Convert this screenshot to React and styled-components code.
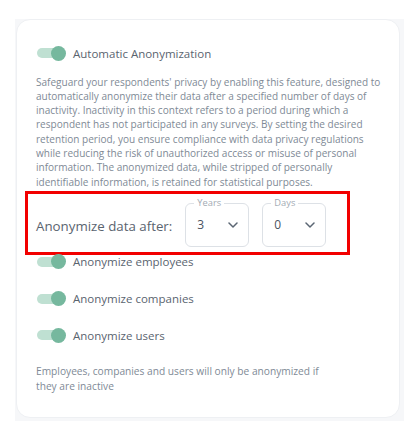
import React from 'react';
import styled, { createGlobalStyle } from 'styled-components';

const GlobalStyle = createGlobalStyle`
  body {
    margin: 0;
    background: #ffffff;
    font-family: "Open Sans", "Liberation Sans", sans-serif;
  }
`;

const options = ['Anonymize employees', 'Anonymize companies', 'Anonymize users'];

function Chevron() {
  return (
    <svg width="10" height="6" viewBox="0 0 10 6" fill="none">
      <path d="M1 1 L5 5 L9 1" stroke="#5b6673" strokeWidth="1.5" strokeLinecap="round" strokeLinejoin="round" />
    </svg>
  );
}

function Toggle({ on }) {
  return (
    <Track>
      <Knob $on={on} />
    </Track>
  );
}

function SelectBox({ label, value }) {
  return (
    <Field>
      <Legend>{label}</Legend>
      <Value>{value}</Value>
      <Chevron />
    </Field>
  );
}

export default function App() {
  return (
    <>
      <GlobalStyle />
      <Page>
        <Backdrop>
          <Card>
            <Row>
              <Toggle on />
              <Label>Automatic Anonymization</Label>
            </Row>
            <Description>
              Safeguard your respondents' privacy by enabling this feature, designed to<br />
              automatically anonymize their data after a specified number of days of<br />
              inactivity. Inactivity in this context refers to a period during which a<br />
              respondent has not participated in any surveys. By setting the desired<br />
              retention period, you ensure compliance with data privacy regulations<br />
              while reducing the risk of unauthorized access or misuse of personal<br />
              information. The anonymized data, while stripped of personally<br />
              identifiable information, is retained for statistical purposes.
            </Description>
            <PeriodRow>
              <PeriodLabel>Anonymize data after:</PeriodLabel>
              <SelectBox label="Years" value="3" />
              <SelectBox label="Days" value="0" />
            </PeriodRow>
            <ToggleList>
              {options.map((t) => (
                <Row key={t}>
                  <Toggle on />
                  <Label>{t}</Label>
                </Row>
              ))}
            </ToggleList>
            <Footnote>
              Employees, companies and users will only be anonymized if
              <br />
              they are inactive
            </Footnote>
          </Card>
        </Backdrop>
      </Page>
    </>
  );
}

const Page = styled.div`
  width: 419px;
  height: 436px;
  padding: 19px 15px 0 15px;
  box-sizing: border-box;
`;

const Backdrop = styled.div`
  width: 389px;
  background: #f6f7f9;
  padding: 0 0 3px 1px;
  box-sizing: border-box;
`;

const Card = styled.div`
  width: 384px;
  height: 399px;
  box-sizing: border-box;
  background: #fff;
  border: 1px solid #eef0f3;
  border-radius: 14px;
  padding: 24px 18px 0 19px;
`;

const Row = styled.div`
  display: flex;
  align-items: center;
  height: 18px;
  gap: 14px;
  white-space: nowrap;
`;

const Track = styled.div`
  position: relative;
  flex: none;
  width: 22px;
  height: 10px;
  margin-left: 1px;
  border-radius: 5px;
  background: #bfe0d2;
`;

const Knob = styled.div`
  position: absolute;
  top: -2.5px;
  left: ${(p) => (p.$on ? '14px' : '-3px')};
  width: 15px;
  height: 15px;
  border-radius: 50%;
  background: #76b89e;
`;

const Label = styled.span`
  font-size: 11.5px;
  color: #5a646f;
`;

const Description = styled.p`
  margin: 12.5px 0 0 0;
  font-size: 10.05px;
  line-height: 14.3px;
  color: #808a96;
  white-space: nowrap;
`;

const PeriodRow = styled.div`
  display: flex;
  align-items: center;
  gap: 13px;
  width: 319px;
  height: 58px;
  margin: 5px 0 0 -8px;
  padding: 9px 0 5px 8px;
  box-sizing: border-box;
  outline: 3px solid #f20000;
`;

const PeriodLabel = styled.span`
  font-size: 13.3px;
  color: #5a646f;
  white-space: nowrap;
  margin-top: 2px;
`;

const Field = styled.div`
  position: relative;
  flex: none;
  display: flex;
  align-items: center;
  justify-content: space-between;
  width: 64px;
  height: 44px;
  box-sizing: border-box;
  border: 1px solid #dde1e6;
  border-radius: 6px;
  padding: 0 10px 0 11px;
`;

const Legend = styled.span`
  position: absolute;
  top: -7px;
  left: 8px;
  padding: 0 3px;
  background: #fff;
  font-size: 9.3px;
  line-height: 12px;
  color: #a3abb4;
`;

const Value = styled.span`
  font-size: 12px;
  color: #4a545f;
  margin-top: -1px;
`;

const ToggleList = styled.div`
  display: flex;
  flex-direction: column;
  gap: 18.7px;
  margin-top: 1px;
`;

const Footnote = styled.p`
  margin: 20px 0 0 0;
  font-size: 10.2px;
  line-height: 14.3px;
  color: #808a96;
`;
